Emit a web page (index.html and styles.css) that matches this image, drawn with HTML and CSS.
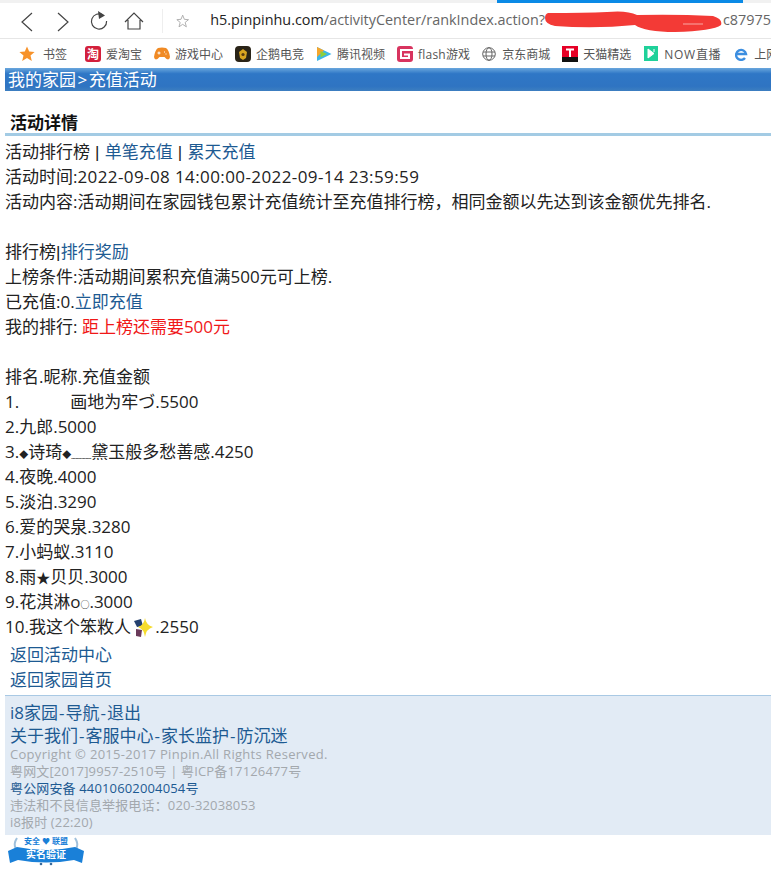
FILE: index.html
```html
<!DOCTYPE html>
<html lang="zh-CN">
<head>
    <meta charset="UTF-8">
    <meta name="viewport" content="width=device-width, initial-scale=1.0">
    <title>充值活动</title>
    <link rel="stylesheet" href="styles.css">
</head>
<body>
    <div class="tabstrip"><div class="tab"></div></div>

    <div class="toolbar">
        <svg class="nav" width="150" height="26" viewBox="0 0 150 26" fill="none" stroke="#444" stroke-width="1.2">
            <path d="M32 5 L22 14 L32 23"/>
            <path d="M58 5 L68 14 L58 23"/>
            <path d="M103 7 A7.6 7.6 0 1 0 106.6 13"/>
            <path d="M98 3 L105 7.5 L99 11 Z" fill="#444" stroke="none"/>
            <path d="M125 14 L134 5 L143 14 M128 12 V21 H140 V12"/>
        </svg>
        <div class="sep"></div>
        <svg class="fav" width="16" height="16" viewBox="0 0 16 16" fill="none" stroke="#aaa" stroke-width="1.1">
            <path d="M8 1 L10 6 L15 6.4 L11 9.7 L12.4 15 L8 12 L3.6 15 L5 9.7 L1 6.4 L6 6 Z"/>
        </svg>
        <div class="url">
            <span class="host">h5.pinpinhu.com</span>/activityCenter/rankIndex.action?<svg class="blot" width="177" height="22" viewBox="0 0 177 22"><path d="M3 3 Q40 3 62 2 Q82 0 92 5 Q130 4 168 6 Q178 9 176 15 Q168 21 130 22 Q100 22 90 15 Q50 19 10 16 Q0 14 0 8 Q0 4 3 3 Z" fill="#f33a36"/><path d="M138 14 H158" stroke="#f9a8a4" stroke-width="1"/></svg>c87975
        </div>
    </div>

    <div class="bookmarks">
        <div class="mark first">
            <svg width="16" height="16" viewBox="0 0 16 16"><path d="M8 0.5 L10.2 5.6 L15.6 6 L11.5 9.6 L12.8 15 L8 12.1 L3.2 15 L4.5 9.6 L0.4 6 L5.8 5.6 Z" fill="#f7922a"/></svg>
            <span>书签</span>
        </div>
        <div class="bar-sep"></div>
        <div class="mark">
            <svg width="16" height="16" viewBox="0 0 16 16"><rect width="16" height="16" rx="3" fill="#d3203c"/><text x="8" y="13" text-anchor="middle" class="icon-char">淘</text></svg>
            <span>爱淘宝</span>
        </div>
        <div class="mark">
            <svg width="16" height="14" viewBox="0 0 16 14"><path d="M4 1 Q8 0 12 1 Q15 3 16 10 Q15.5 13.5 12.5 12 L10.5 10 H5.5 L3.5 12 Q0.5 13.5 0 10 Q1 3 4 1 Z" fill="#f08a24"/><path d="M3.5 6 H6.5 M5 4.5 V7.5 M10 5 h1 M11.5 7 h1" stroke="#fff"/></svg>
            <span>游戏中心</span>
        </div>
        <div class="mark">
            <svg width="16" height="16" viewBox="0 0 16 16"><rect width="16" height="16" rx="4" fill="#2a2418"/><path d="M8 3 L12 6 L11 12 L8 14 L5 12 L4 6 Z" fill="#d9a520"/><circle cx="8" cy="8.5" r="1.6" fill="#5a3b10"/></svg>
            <span>企鹅电竞</span>
        </div>
        <div class="mark">
            <svg width="16" height="16" viewBox="0 0 16 16"><path d="M1 1 L15.5 8 L1 15 Z" fill="#3bb6e8"/><path d="M1 1 L8 4.5 L1 11 Z" fill="#f5a62c"/><path d="M4.5 5 L11 8 L4.5 11.5 Z" fill="#8dd03a"/></svg>
            <span>腾讯视频</span>
        </div>
        <div class="mark flash">
            <svg width="16" height="16" viewBox="0 0 16 16"><rect width="16" height="16" rx="3" fill="#d8345f"/><path d="M16 4 H4 V12 H12 V8.5 H7" fill="none" stroke="#fff" stroke-width="2"/></svg>
            <span>flash游戏</span>
        </div>
        <div class="mark wide">
            <svg width="14" height="14" viewBox="0 0 14 14" fill="none" stroke="#666"><circle cx="7" cy="7" r="6.3"/><ellipse cx="7" cy="7" rx="3" ry="6.3"/><path d="M1 5 H13 M1 9 H13"/></svg>
            <span>京东商城</span>
        </div>
        <div class="mark">
            <svg width="16" height="16" viewBox="0 0 16 16"><rect width="16" height="11" fill="#e60026"/><rect y="11" width="16" height="5" fill="#111"/><path d="M4 3.5 H12 M8 3.5 V11" stroke="#fff" stroke-width="2"/></svg>
            <span>天猫精选</span>
        </div>
        <div class="mark wide now">
            <svg width="14" height="15" viewBox="0 0 14 15"><rect width="14" height="15" fill="#1fd19a"/><path d="M4 3 V12 L10 7.5 Z M10 3 V6" fill="#fff" stroke="#fff"/></svg>
            <span>NOW直播</span>
        </div>
        <div class="mark wide web">
            <svg width="13" height="14" viewBox="0 0 13 14" fill="none"><path d="M2 7 H11 A5 5 0 1 0 10 11" stroke="#3c8ee0" stroke-width="2.4"/></svg>
            <span>上网</span>
        </div>
    </div>

    <div class="page">
        <div class="title-bar">我的家园<span class="gt">&gt;</span>充值活动</div>
        <h3 class="section-title">活动详情</h3>

        <div class="content">
            <div>活动排行榜<span class="pipe"> | </span><a href="#">单笔充值</a><span class="pipe"> | </span><a href="#">累天充值</a></div>
            <div>活动时间:<span class="latin">2022-09-08 14:00:00-2022-09-14 23:59:59</span></div>
            <div>活动内容:活动期间在家园钱包累计充值统计至充值排行榜，相同金额以先达到该金额优先排名.</div>
            <div></div>
            <div>排行榜<span class="pipe">|</span><a href="#">排行奖励</a></div>
            <div>上榜条件:活动期间累积充值满500元可上榜.</div>
            <div>已充值:0.<a href="#">立即充值</a></div>
            <div>我的排行: <span class="red">距上榜还需要500元</span></div>
            <div></div>
            <div>排名.昵称.充值金额</div>
            <div>1.<span class="pad"></span>画地为牢づ.5500</div>
            <div>2.九郎.5000</div>
            <div>3.<span class="tiny">◆</span>诗琦<span class="tiny">◆</span><span class="wave">﹏﹏</span>黛玉般多愁善感.4250</div>
            <div>4.夜晚.4000</div>
            <div>5.淡泊.3290</div>
            <div>6.爱的哭泉.3280</div>
            <div>7.小蚂蚁.3110</div>
            <div>8.雨<span class="star">★</span>贝贝.3000</div>
            <div>9.花淇淋o<span class="tiny">○</span>.3000</div>
            <div>10.我这个笨敉人 <svg class="emoji" width="20" height="20" viewBox="0 0 20 20">
                    <path d="M1 3 L8 1 L10 8 L4 9 Z" fill="#24406e"/>
                    <path d="M3 11 L9 12 L8 19 L3 18 Z" fill="#6a3a5a"/>
                    <path d="M12 0 Q13 7 20 9 Q13 11 12 19 Q11 11 5 9 Q11 7 12 0 Z" fill="#f6dc2c"/>
                </svg>.2550</div>
        </div>

        <div class="back-links">
            <a href="#">返回活动中心</a>
            <a href="#">返回家园首页</a>
        </div>

        <div class="foot">
            <div class="foot-nav"><a href="#">i8家园</a><span class="dash">-</span><a href="#">导航</a><span class="dash">-</span><a href="#">退出</a></div>
            <div class="foot-nav"><a href="#">关于我们</a><span class="dash">-</span><a href="#">客服中心</a><span class="dash">-</span><a href="#">家长监护</a><span class="dash">-</span><a href="#">防沉迷</a></div>
            <div class="foot-info">
                <div class="small wider">Copyright © 2015-2017 Pinpin.All Rights Reserved.</div>
                <div class="small">粤网文[2017]9957-2510号 | 粤ICP备17126477号</div>
                <div class="small"><a href="#">粤公网安备 44010602004054号</a></div>
                <div class="small">违法和不良信息举报电话：020-32038053</div>
                <div class="small">i8报时 (22:20)</div>
            </div>
        </div>

        <div class="badge">
            <svg width="76" height="31" viewBox="0 0 76 31">
                <path d="M9 3 Q5 9 8 14 M67 3 Q71 9 68 14" fill="none" stroke="#9fc0dc" stroke-width="2"/>
                <path d="M0 16 L9 12 Q38 18 67 12 L76 16 L74 28 L66 25 Q38 30 10 25 L2 28 Z" fill="#1a80d8"/>
                <circle cx="33" cy="29" r="1.3" fill="#3a6a9a"/>
                <circle cx="43" cy="29" r="1.3" fill="#3a6a9a"/>
                <text x="38" y="9" text-anchor="middle" class="badge-top">安全 ♥ 联盟</text>
                <text x="38" y="23" text-anchor="middle" class="badge-main">实名验证</text>
            </svg>
        </div>
    </div>
</body>
</html>
```

FILE: styles.css
```css
* {
    margin: 0;
    padding: 0;
    box-sizing: border-box;
}
body {
    font-family: "Open Sans", "Noto Sans CJK SC", sans-serif;
    font-size: 17px;
    color: #222;
    background-color: #fff;
    overflow: hidden;
    width: 771px;
    height: 884px;
}
a {
    color: #1d5a92;
    text-decoration: none;
}

/* browser chrome */
.tabstrip {
    height: 3px;
    background-color: #f1f1f1;
    padding-left: 497px;
}
.tab {
    width: 246px;
    height: 3px;
    background-color: #0a8ae6;
}
.toolbar {
    height: 36px;
    display: flex;
    align-items: center;
    border-bottom: 1px solid #e6e6e6;
    white-space: nowrap;
    overflow: hidden;
}
.nav {
    flex-shrink: 0;
}
.sep {
    width: 1px;
    height: 24px;
    margin-left: 12px;
    background-color: #eee;
}
.fav {
    margin-left: 13px;
}
.url {
    margin-left: 21px;
    font-size: 14.4px;
    color: #666;
}
.host {
    color: #222;
}
.blot {
    vertical-align: -7px;
    margin: 0 1px 0 0;
}
.bookmarks {
    height: 29px;
    display: flex;
    align-items: center;
    gap: 12px;
    padding-left: 19px;
    font-size: 12px;
    color: #555;
    white-space: nowrap;
    overflow: hidden;
}
.mark {
    display: flex;
    align-items: center;
    gap: 5px;
}
.first {
    gap: 8px;
}
.wide {
    gap: 6px;
}
.flash {
    letter-spacing: 0.2px;
}
.now {
    margin-left: 1px;
    letter-spacing: 0.7px;
}
.web {
    margin-left: 2px;
}
.bar-sep {
    width: 1px;
    height: 16px;
    margin: 0 -4px 0 -2px;
    background-color: #e8e8e8;
}
.icon-char {
    font-size: 12px;
    font-weight: 700;
    fill: #fff;
}

/* page */
.page {
    padding-left: 4px;
}
.title-bar {
    margin-left: 1px;
    height: 23px;
    line-height: 24px;
    padding-left: 3px;
    color: #fff;
    background: linear-gradient(#6aa7dd 0%, #2f77c6 25%, #2f74c2 80%, #3d7fc0 100%);
}
.gt {
    margin: 0 1.5px;
}
.section-title {
    margin: 20px 0 0 1px;
    height: 25px;
    line-height: 23px;
    padding-left: 5px;
    font-size: 17px;
    font-weight: 700;
    color: #111;
    border-bottom: 3px solid #a3cbe4;
}
.content {
    margin: 3px 0 0 1px;
    line-height: 25px;
}
.content > div {
    height: 25px;
}
.latin {
    letter-spacing: 0.4px;
}
.pipe {
    font-family: "Liberation Sans", sans-serif;
    letter-spacing: 0.3px;
    white-space: pre;
}
.pad {
    display: inline-block;
    width: 51px;
}
.tiny {
    font-size: 9px;
    line-height: 1;
}
.wave {
    font-size: 10px;
    line-height: 1;
}
.star {
    font-size: 14px;
    line-height: 1;
}
.red {
    color: #f01818;
}
.emoji {
    vertical-align: -5px;
    margin: 0 2px 0 -2px;
}
.back-links {
    margin-top: 3px;
    padding-left: 6px;
    line-height: 25px;
    display: flex;
    flex-direction: column;
}
.foot {
    margin: 3px 0 0 1px;
    height: 140px;
    padding: 7px 0 0 5px;
    background-color: #e2ebf5;
    border-top: 1px solid #a9c9e4;
    color: #1d5a92;
}
.foot-nav {
    line-height: 19px;
}
.foot-nav + .foot-nav {
    margin-top: 4px;
}
.foot-info {
    margin-top: 1px;
}
.dash {
    margin: 0 1px;
}
.small {
    font-size: 13px;
    line-height: 17px;
    letter-spacing: 0.15px;
    color: #a3a8ad;
}
.wider {
    letter-spacing: 0.3px;
}
.badge {
    padding-left: 4px;
    height: 32px;
}
.badge-top {
    font-size: 8px;
    font-weight: 700;
    fill: #1a80d8;
}
.badge-main {
    font-size: 10px;
    font-weight: 700;
    fill: #fff;
}
```
